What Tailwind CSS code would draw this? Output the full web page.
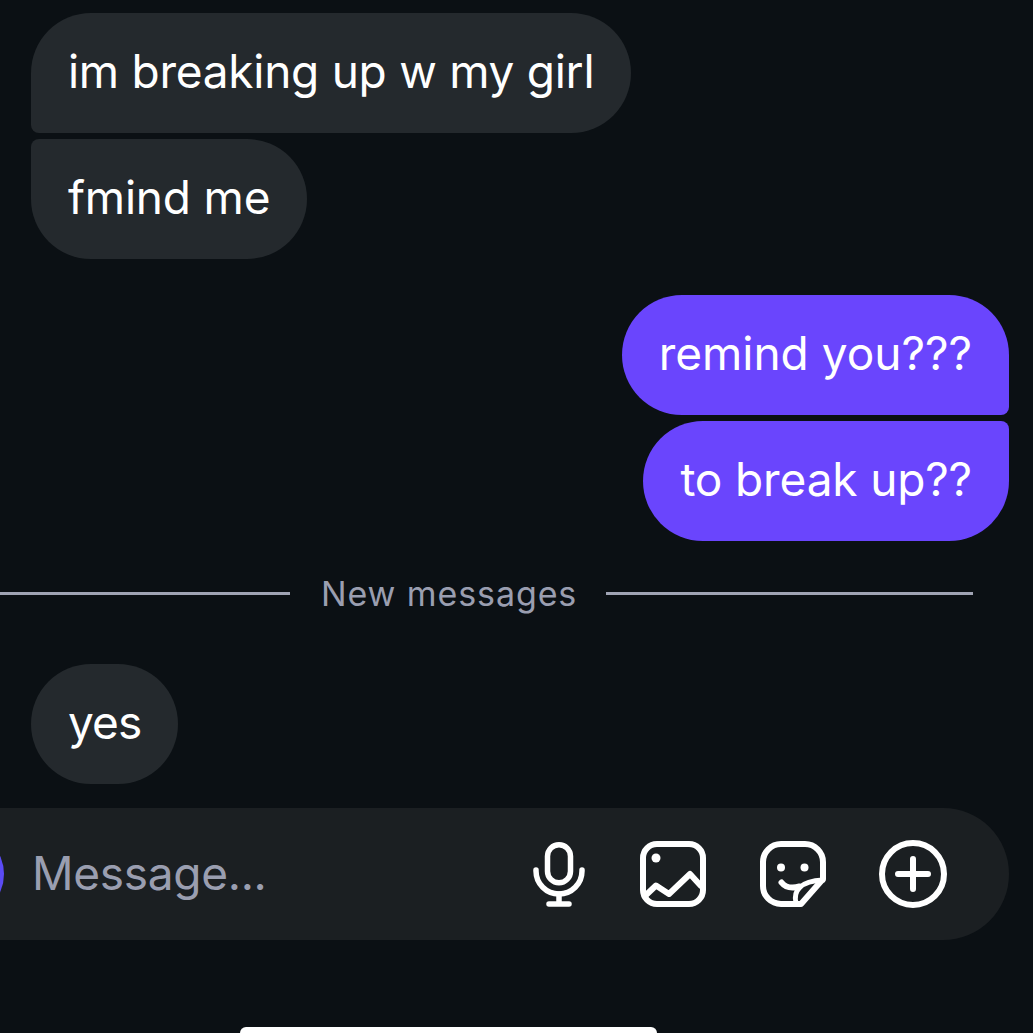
<!DOCTYPE html>
<html lang="en">
<head>
    <meta charset="UTF-8">
    <title>Messages</title>
    <script src="https://cdn.jsdelivr.net/npm/@tailwindcss/browser@4"></script>
</head>
<body class="bg-[#0b1014] font-['Inter',sans-serif] text-white text-[46px] leading-[54px] overflow-hidden">
    <div class="h-[1033px] w-[1033px] overflow-hidden flex flex-col pt-[13px] relative">
        <!-- Received -->
        <div class="flex flex-col items-start gap-[6px] pl-[31px]">
            <div class="h-[120px] px-[37px] pb-[4px] flex items-center tracking-[-0.27px] bg-[#24292d] rounded-[60px] rounded-bl-[8px]">im breaking up w my girl</div>
            <div class="h-[120px] px-[37px] pb-[4px] flex items-center tracking-[-0.2px] bg-[#24292d] rounded-[60px] rounded-tl-[8px]">fmind me</div>
        </div>

        <!-- Sent -->
        <div class="flex flex-col items-end gap-[6px] pr-[24px] mt-[36px]">
            <div class="h-[120px] px-[37px] pb-[4px] flex items-center bg-[#6a45fd] rounded-[60px] rounded-br-[8px]">remind you???</div>
            <div class="h-[120px] px-[37px] pb-[4px] flex items-center tracking-[-0.15px] bg-[#6a45fd] rounded-[60px] rounded-tr-[8px]">to break up??</div>
        </div>

        <!-- Divider -->
        <div class="flex items-center h-[40px] mt-[32px] pr-[60px]">
            <div class="w-[290px] h-[3px] bg-[#a0a4b4]"></div>
            <div class="w-[316px] pl-[31px] pt-[2px] text-[34px] leading-[40px] tracking-[0.9px] text-[#9a9eb0] whitespace-nowrap">New messages</div>
            <div class="flex-1 h-[3px] bg-[#a0a4b4]"></div>
        </div>

        <!-- Received -->
        <div class="flex pl-[31px] mt-[51px]">
            <div class="h-[120px] px-[37px] pb-[4px] flex items-center tracking-[-0.9px] bg-[#24292d] rounded-[60px]">yes</div>
        </div>

        <!-- Input -->
        <div class="flex items-center h-[132px] mt-[24px] ml-[-100px] mr-[24px] bg-[#1b1f22] rounded-[66px]">
            <div class="w-[88px] h-[88px] ml-[16px] rounded-full bg-[#5b4bf5] shrink-0"></div>
            <div class="ml-[28px] pb-[3px] flex-1 tracking-[-0.3px] text-[#9a9eb0]">Message...</div>

            <svg class="w-[52px] h-[66px] shrink-0" viewBox="0 0 52 66" fill="none" stroke="#fff" stroke-width="5.5" stroke-linecap="round" stroke-linejoin="round">
                <rect x="14.500" y="3.750" width="23" height="38" rx="11.500"/>
                <path d="M3 29v1a23 23 0 0 0 46 0v-1"/>
                <path d="M26 53v10M16 63h20"/>
            </svg>
            <svg class="w-[66px] h-[66px] ml-[55px] shrink-0" viewBox="0 0 66 66" fill="none" stroke="#fff" stroke-width="6" stroke-linecap="round" stroke-linejoin="round">
                <rect x="3" y="3" width="60" height="60" rx="14"/>
                <circle cx="16" cy="17" r="4.500" fill="#fff" stroke="none"/>
                <path d="M6 54l10-9.500 13 8.500 21-20 11 12"/>
            </svg>
            <svg class="w-[66px] h-[66px] ml-[54px] shrink-0" viewBox="0 0 66 66" fill="none" stroke="#fff" stroke-width="6" stroke-linecap="round" stroke-linejoin="round">
                <path d="M63 38V21A18 18 0 0 0 45 3H21A18 18 0 0 0 3 21V45A18 18 0 0 0 21 63H41Z"/>
                <circle cx="21" cy="26.500" r="4" fill="#fff" stroke="none"/>
                <circle cx="44.500" cy="26.500" r="4" fill="#fff" stroke="none"/>
                <path d="M21.500 41.500c4 5 11 6 18 4"/>
                <path d="M36 62C33 50 40 40 63 39" stroke-width="5"/>
            </svg>
            <svg class="w-[68px] h-[68px] ml-[53px] mr-[62px] shrink-0" viewBox="0 0 68 68" fill="none" stroke="#fff" stroke-width="6" stroke-linecap="round">
                <circle cx="34" cy="34" r="31"/>
                <path d="M34 19v30M19 34h30"/>
            </svg>
        </div>

        <!-- Home indicator -->
        <div class="absolute left-[240px] top-[1027px] w-[417px] h-[12px] bg-white rounded-[6px]"></div>
    </div>
</body>
</html>
